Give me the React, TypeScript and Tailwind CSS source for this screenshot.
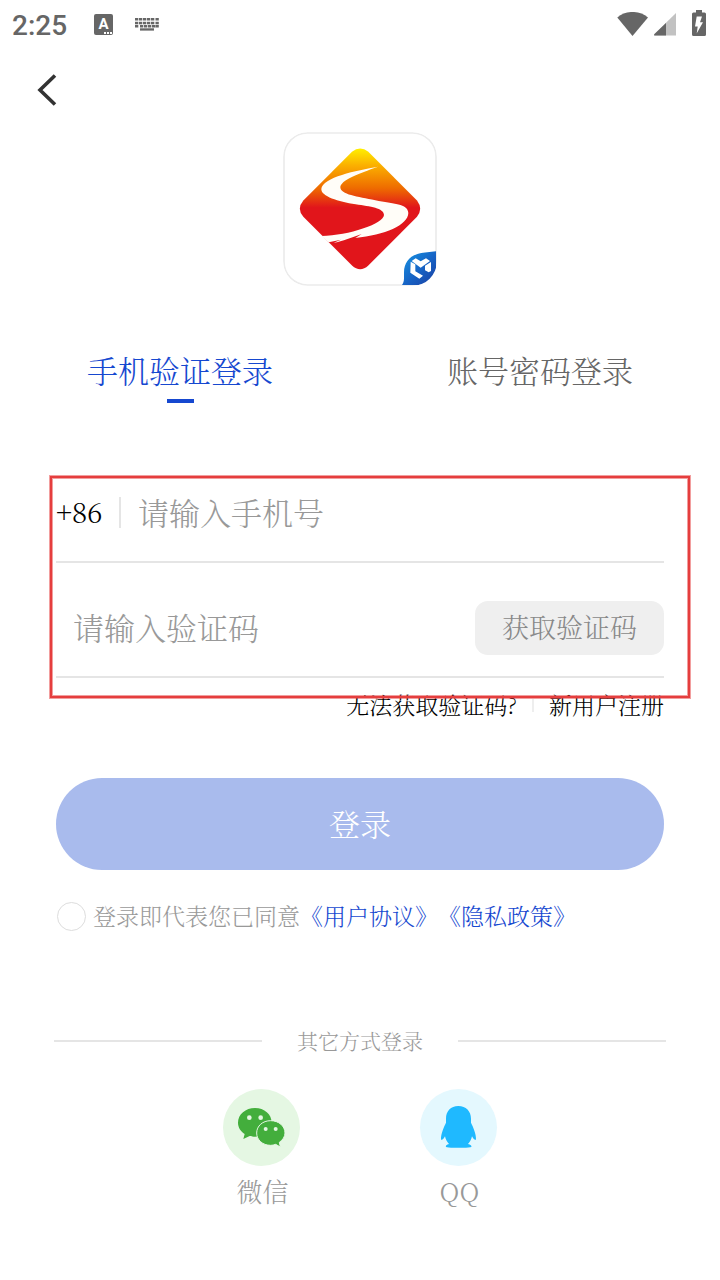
import React, { useState } from 'react';

const KEY_ROWS = [
  { y: 0, keys: [0, 4, 8, 12, 16, 20.5] },
  { y: 3.8, keys: [0, 4, 8, 12, 16, 20.5] },
  { y: 7, keys: [0, 5, 9, 13, 17, 20.5] },
];

function StatusBar() {
  return (
    <div className="flex h-12 items-center justify-between pl-3 pr-[14px] text-[#666666]">
      <div className="flex items-center">
        <span className="w-[82px] pt-[4px] font-['Roboto',sans-serif] text-[28px] font-medium leading-[48px]">2:25</span>
        <div className="relative h-[21px] w-[19px] rounded-[2px] bg-[#666666]">
          <span className="absolute inset-x-0 top-0 text-center font-['Roboto',sans-serif] text-[15px] font-bold leading-[20px] text-white">A</span>
          <span className="absolute bottom-[1px] right-[1px] flex gap-[1px]">
            <i className="size-[2px] bg-white" />
            <i className="size-[2px] bg-white" />
            <i className="size-[2px] bg-white" />
          </span>
        </div>
        <svg className="ml-[22px]" width="24" height="13" viewBox="0 0 24 13" fill="currentColor">
          {KEY_ROWS.map((row) =>
            row.keys.map((x) => <rect key={`${row.y}-${x}`} x={x} y={row.y} width="3.3" height="2.5" />)
          )}
          <rect x="5" y="10.3" width="14" height="2.3" />
        </svg>
      </div>
      <div className="flex items-center">
        <svg width="32" height="24" viewBox="0 0 32 24" fill="currentColor">
          <path d="M0.3 5.5C8.5 -1.9 22.5 -1.9 31 5.5L15.5 24Z" />
        </svg>
        <svg className="ml-[5px]" width="22" height="23" viewBox="0 0 22 23">
          <path d="M22 0V22.5H1Q-0.5 22.5 0.5 21Z" fill="#c2c2c2" />
          <path d="M12 10V22.5H1Q-0.5 22.5 0.5 21Z" fill="#666666" />
        </svg>
        <svg className="-mt-[2px] ml-[16px]" width="14" height="26" viewBox="0 0 14 26">
          <path d="M4 0H10V2.5H12.5Q14 2.5 14 4V24.5Q14 26 12.5 26H1.5Q0 26 0 24.5V4Q0 2.5 1.5 2.5H4Z" fill="#666666" />
          <path d="M4.7 6.5H10L8 12.2H11L4.7 23.6L5.7 16.4H3Z" fill="#fff" />
        </svg>
      </div>
    </div>
  );
}

function AppLogo() {
  return (
    <div className="size-[154px] overflow-hidden rounded-[25px]">
      <svg width="154" height="154" viewBox="24 21 462 462">
        <defs>
          <linearGradient id="sun" gradientUnits="userSpaceOnUse" x1="0" y1="70" x2="0" y2="433">
            <stop offset="0" stopColor="#fff000" />
            <stop offset="0.14" stopColor="#fbb000" />
            <stop offset="0.33" stopColor="#ee6b00" />
            <stop offset="0.49" stopColor="#e1151b" />
            <stop offset="1" stopColor="#e1151b" />
          </linearGradient>
          <linearGradient id="leaf" x1="0" y1="0" x2="1" y2="1">
            <stop offset="0" stopColor="#1598e5" />
            <stop offset="0.55" stopColor="#1762c4" />
            <stop offset="1" stopColor="#1b3fa2" />
          </linearGradient>
        </defs>
        <rect x="27" y="24" width="456" height="456" rx="70" fill="#fff" stroke="#ebebeb" strokeWidth="5" />
        <path
          d="M231 80.5Q255.5 61 280 80.5L426 226.5Q445 251 426 275.5L280 421.5Q255.5 444 231 421.5L85 275.5Q64 251 85 226.5Z"
          fill="url(#sun)"
        />
        <path
          d="M309 125C245 136 142 157 139 192C138 214 190 230 242 238C287 245 326 249 327 270C325 297 222 331 140 333L161 352L198 344L176 353C202 350 233 336 260 327L241 339C330 330 399 300 400 264C398 235 356 238 301 226C248 215 196 209 196 187C197 165 250 146 309 125Z"
          fill="#fffdf8"
        />
        <path d="M483 379L444 383C407 388 387 410 387 442V460C387 470 384 476 381 480L430 480C462 480 483 460 483 430Z" fill="url(#leaf)" />
        <path d="M407 410L421 418V439L444 452L433 461L406 443Z" fill="#fff" />
        <path d="M410 408L422 400L437 409L453 400L465 408L437 428Z" fill="#fff" />
        <path d="M468 411V438L461 442L450 436V422Z" fill="#fff" />
      </svg>
    </div>
  );
}

function WechatIcon() {
  return (
    <svg width="77" height="77" viewBox="69 207 231 231">
      <path d="M165 264C137 264 114 283 114 308C114 322 122 334 134 342L130 357L149 348C154 350 160 350 165 350C193 350 215 331 215 308C215 283 193 264 165 264Z" fill="#43ae3c" />
      <path d="M212 302C188 302 170 318 170 339C170 360 188 376 212 376C217 376 222 375 227 373L241 381L238 367C248 360 255 350 255 339C255 318 236 302 212 302Z" fill="#43ae3c" stroke="#e5f7e3" strokeWidth="3" />
      <circle cx="148" cy="293" r="7" fill="#e5f7e3" />
      <circle cx="182" cy="293" r="7" fill="#e5f7e3" />
      <circle cx="197" cy="327" r="6" fill="#e5f7e3" />
      <circle cx="227" cy="327" r="6" fill="#e5f7e3" />
    </svg>
  );
}

function QQIcon() {
  return (
    <svg width="77" height="77" viewBox="660 207 231 231">
      <path
        d="M775 258C752 258 738 274 738 296V308C732 320 722 342 723 359C727 361 732 355 735 349C737 359 741 366 747 372C740 374 736 377 738 381C742 384 768 383 775 383C782 383 809 384 814 381C816 377 811 374 804 372C810 366 814 359 816 349C819 355 824 361 828 359C829 342 819 320 813 308V296C813 274 798 258 775 258Z"
        fill="#1fb9ff"
      />
    </svg>
  );
}

const TABS = ['手机验证登录', '账号密码登录'];

export default function App() {
  const [tab, setTab] = useState(0);
  const [phone, setPhone] = useState('');
  const [code, setCode] = useState('');
  const [agreed, setAgreed] = useState(false);

  return (
    <div className="h-[1280px] w-[720px] overflow-hidden bg-white font-['Noto_Serif_CJK_SC','Liberation_Serif','Noto_Sans_CJK_SC',serif] font-light">
      <StatusBar />

      <header className="flex h-[84px] items-center pl-[36px]">
        <button aria-label="back">
          <svg width="22" height="32" viewBox="0 0 22 32" fill="none" stroke="#333333" strokeWidth="3.6">
            <path d="M19 1.5L4 16L19 30.5" />
          </svg>
        </button>
      </header>

      <div className="flex justify-center">
        <AppLogo />
      </div>

      <nav className="mt-[56px] flex">
        {TABS.map((name, i) => (
          <button
            key={name}
            onClick={() => setTab(i)}
            className={`flex flex-1 flex-col items-center text-[31px] leading-[56px] ${tab === i ? 'text-[#1648d0]' : 'text-[#666666]'}`}
          >
            {name}
            <span className={`mt-px h-1 w-[27px] ${tab === i ? 'bg-[#1648d0]' : ''}`} />
          </button>
        ))}
      </nav>

      <section className="relative mt-[62px] px-14">
        <div className="flex h-[98px] items-center border-b-2 border-[#e5e5e5] pb-[1px]">
          <span className="w-[46px] whitespace-nowrap pb-[4px] text-[28px] text-black">+86</span>
          <span className="ml-[17px] h-[31px] w-[2px] bg-[#e5e5e5]" />
          <input
            type="tel"
            placeholder="请输入手机号"
            value={phone}
            onChange={(e) => setPhone(e.target.value)}
            className="ml-[17px] h-[60px] w-[400px] pb-[2px] text-[31px] outline-none placeholder:text-[#999999]"
          />
        </div>
        <div className="flex h-[115px] items-center justify-between border-b-2 border-[#e5e5e5] pl-[17px] pt-[17px]">
          <input
            type="text"
            placeholder="请输入验证码"
            value={code}
            onChange={(e) => setCode(e.target.value)}
            className="h-[60px] w-[380px] pb-[3px] text-[31px] outline-none placeholder:text-[#999999]"
          />
          <button className="h-[54px] w-[189px] rounded-[13px] bg-[#efefef] pb-[2px] text-[27px] leading-[52px] text-[#888888]">获取验证码</button>
        </div>
        <div className="absolute left-[50px] top-[11px] h-[222px] w-[640px] border-2 border-[#e53e3e] shadow-[0_0_0_1px_#e53e3e80,inset_0_0_0_1px_#e53e3e80]" />
      </section>

      <div className="flex h-14 items-center justify-end px-14 pb-[2px] text-[23px] text-black">
        <a>无法获取验证码?</a>
        <span className="mx-[15px] h-[13px] w-[2px] bg-[#eeeeee]" />
        <a>新用户注册</a>
      </div>

      <div className="mt-11 px-14">
        <button className="h-[92px] w-full rounded-full bg-[#a9bbed] pb-[2px] text-[31px] text-white">登录</button>
      </div>

      <div className="mt-[23px] flex h-[46px] items-center pl-[57px] text-[23px] text-[#999999]">
        <button
          aria-label="agree"
          onClick={() => setAgreed(!agreed)}
          className={`mr-[7px] size-[29px] rounded-full border-[1.5px] border-[#dddddd] ${agreed ? 'bg-[#1648d0]' : ''}`}
        />
        <span>登录即代表您已同意</span>
        <a className="text-[#1648d0]">《用户协议》</a>
        <a className="text-[#1648d0]">《隐私政策》</a>
      </div>

      <div className="mt-[79px] flex h-[46px] items-center justify-between px-[54px] text-[21px] text-[#999999]">
        <span className="h-[2px] w-[208px] bg-[#e5e5e5]" />
        其它方式登录
        <span className="h-[2px] w-[208px] bg-[#e5e5e5]" />
      </div>

      <div className="mt-[25px] flex justify-center gap-[120px] text-[26px] leading-[50px] text-[#999999]">
        <button className="flex w-[77px] flex-col items-center">
          <span className="size-[77px] rounded-full bg-[#e5f7e3]"><WechatIcon /></span>
          <span className="pl-[2px]">微信</span>
        </button>
        <button className="flex w-[77px] flex-col items-center">
          <span className="size-[77px] rounded-full bg-[#e4f8fe]"><QQIcon /></span>
          <span className="pl-[2px]">QQ</span>
        </button>
      </div>
    </div>
  );
}
